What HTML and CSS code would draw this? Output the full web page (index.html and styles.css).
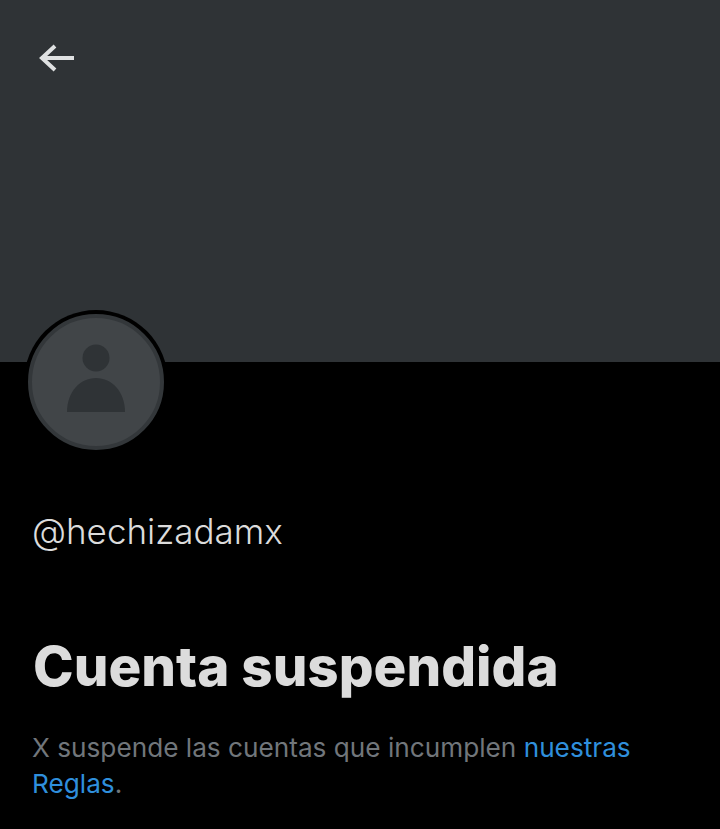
FILE: index.html
```html
<!DOCTYPE html>
<html lang="en">
<head>
  <meta charset="UTF-8" />
  <title>Cuenta suspendida</title>
  <link rel="stylesheet" href="styles.css">
</head>
<body>

<header class="banner">
  <svg class="back" width="38" height="30" viewBox="0 0 38 30" aria-hidden="true">
    <path d="M17 3 L4 15 L17 27 M4 15 H36" />
  </svg>
</header>

<main>
  <div class="avatar">
    <svg width="128" height="128" viewBox="0 0 128 128" aria-hidden="true">
      <circle cx="64" cy="40" r="13.5" />
      <path d="M35 94 C35 74 48 60 64 60 C80 60 93 74 93 94 Z" />
    </svg>
  </div>
  <p class="handle">@hechizadamx</p>
  <h1>Cuenta suspendida</h1>
  <p class="note">X suspende las cuentas que incumplen <a href="#">nuestras Reglas</a>.</p>
</main>

</body>
</html>
```

FILE: styles.css
```css
body {
  background-color: #000;
  margin: 0;
  height: 829px;
  overflow: hidden;
  font-family: Inter, "Noto Sans", sans-serif;
}
.banner {
  background-color: #2f3336;
  height: 362px;
  padding: 43px 0 0 38px;
  box-sizing: border-box;
}
.back {
  display: block;
  fill: none;
  stroke: #dfe1e2;
  stroke-width: 4;
}
main {
  padding: 0 33px;
}
.avatar {
  width: 136px;
  height: 136px;
  margin: -48px 0 0 -5px;
  box-sizing: border-box;
  background-color: #414548;
  border: 4px solid #33373a;
  border-radius: 50%;
  box-shadow: 0 0 0 4px #000;
  position: relative;
  display: flex;
  align-items: center;
  justify-content: center;
}
.avatar svg {
  fill: #2f3336;
  flex: none;
}
.handle {
  margin: 59px 0 0 -1px;
  font-size: 35px;
  line-height: 44px;
  color: #dcdcdc;
  font-weight: 300;
}
h1 {
  margin: 80px 0 0;
  font-size: 54.7px;
  line-height: 66px;
  font-weight: 800;
  color: #dcdcdc;
}
.note {
  margin: 31px 0 0 -1px;
  font-size: 26.2px;
  line-height: 36px;
  color: #71767b;
  width: 640px;
}
.note a {
  color: #2f8fdc;
  text-decoration: none;
}
```
